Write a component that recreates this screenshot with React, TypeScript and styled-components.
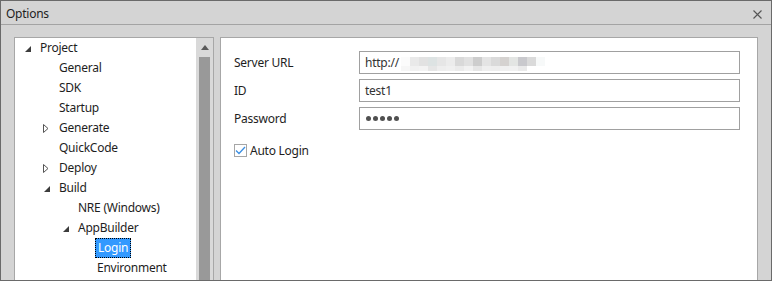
import React from "react";
import styled, { createGlobalStyle } from "styled-components";

const GlobalStyle = createGlobalStyle`
  html, body {
    margin: 0;
    padding: 0;
    background: #ffffff;
  }
  * {
    box-sizing: border-box;
  }
`;

const font = `"Noto Sans", "Open Sans", sans-serif`;

const Window = styled.div`
  width: 772px;
  height: 281px;
  border: 1px solid #6a6a6a;
  background-color: #d4d4d4;
  display: flex;
  flex-direction: column;
  overflow: hidden;
  font-family: ${font};
  font-size: 12px;
  letter-spacing: -0.25px;
  color: #1e1e1e;
`;

const TitleBar = styled.div`
  height: 24px;
  flex: none;
  display: flex;
  align-items: center;
  justify-content: space-between;
  padding: 3px 9px 0 5px;
  border-bottom: 1px solid #a3a3a3;
`;

const Title = styled.span`
  font-size: 12px;
  line-height: 1;
`;

const CloseButton = styled.svg`
  width: 9px;
  height: 9px;
  display: block;
`;

const Body = styled.div`
  flex: 1;
  min-height: 0;
  display: flex;
  gap: 6px;
  padding: 12px 13px 0 13px;
`;

const TreePanel = styled.div`
  width: 200px;
  height: 260px;
  flex: none;
  display: flex;
  border: 1px solid #a7a7a7;
  background: #ffffff;
`;

const TreeList = styled.ul`
  flex: 1;
  list-style: none;
  margin: 0;
  padding: 0;
`;

const TreeRow = styled.li<{ $level: number }>`
  height: 20px;
  display: flex;
  align-items: center;
  padding-left: ${({ $level }) => 10 + $level * 19}px;
  white-space: nowrap;
`;

const ArrowCell = styled.span`
  width: 15px;
  height: 20px;
  flex: none;
  display: flex;
  align-items: center;
`;

const Label = styled.span<{ $selected?: boolean }>`
  height: 20px;
  line-height: 18px;
  margin-left: ${({ $selected }) => ($selected ? "-2px" : "0")};
  padding: 0 ${({ $selected }) => ($selected ? "2px" : "0")};
  background: ${({ $selected }) => ($selected ? "#3399ff" : "transparent")};
  color: ${({ $selected }) => ($selected ? "#ffffff" : "#1e1e1e")};
  border: 1px ${({ $selected }) => ($selected ? "dotted #000000" : "solid transparent")};
  border-left-width: ${({ $selected }) => ($selected ? "1px" : "0")};
`;

const ScrollBar = styled.div`
  width: 17px;
  flex: none;
  display: flex;
  flex-direction: column;
  background: #d9d9d9;
`;

const ScrollArrow = styled.div`
  height: 19px;
  display: flex;
  align-items: center;
  justify-content: center;
`;

const ScrollThumb = styled.div`
  flex: 1;
  margin: 0 3px 0 3px;
  background: #999999;
`;

const ContentPanel = styled.div`
  width: 538px;
  height: 260px;
  flex: none;
  border: 1px solid #a7a7a7;
  background: #ffffff;
  padding: 13px 17px 0 13px;
  display: flex;
  flex-direction: column;
  gap: 5px;
`;

const FieldRow = styled.div`
  display: flex;
  align-items: center;
  height: 23px;
`;

const FieldLabel = styled.span`
  width: 125px;
  flex: none;
`;

const TextBox = styled.div`
  flex: 1;
  height: 23px;
  border: 1px solid #a0a0a0;
  display: flex;
  align-items: center;
  padding-left: 5px;
  color: #333333;
  overflow: hidden;
`;

const Dots = styled.span`
  display: flex;
  gap: 2px;
  padding-left: 1px;
`;

const Dot = styled.span`
  width: 5px;
  height: 5px;
  border-radius: 50%;
  background: #505050;
`;

const Pixelated = styled.span`
  display: grid;
  grid-template-columns: repeat(18, 9px);
  grid-template-rows: 9px 5px;
  margin-left: 2px;
  margin-top: 3px;
`;

const Pixel = styled.span<{ $c: string }>`
  background: ${({ $c }) => $c};
`;

const CheckRow = styled.label`
  display: flex;
  align-items: center;
  gap: 3px;
  margin-top: 7px;
  height: 17px;
`;

const CheckBox = styled.span`
  width: 13px;
  height: 13px;
  border: 1px solid #a6a6a6;
  background: #ffffff;
  display: flex;
  align-items: center;
  justify-content: center;
`;

type Node = {
  label: string;
  level: number;
  arrow?: "open" | "closed";
  selected?: boolean;
};

const tree: Node[] = [
  { label: "Project", level: 0, arrow: "open" },
  { label: "General", level: 1 },
  { label: "SDK", level: 1 },
  { label: "Startup", level: 1 },
  { label: "Generate", level: 1, arrow: "closed" },
  { label: "QuickCode", level: 1 },
  { label: "Deploy", level: 1, arrow: "closed" },
  { label: "Build", level: 1, arrow: "open" },
  { label: "NRE (Windows)", level: 2 },
  { label: "AppBuilder", level: 2, arrow: "open" },
  { label: "Login", level: 3, selected: true },
  { label: "Environment", level: 3 },
];

const row1 = [
  "#fbfbfb", "#e9e9e9", "#e2e2e2", "#dde3e3", "#e6e6e6", "#ececec", "#d9d9d9",
  "#e1e1e1", "#cdcdcd", "#e4e4e4", "#dadada", "#d5d2d0", "#e3e5e3", "#c9c9cd",
  "#dadada", "#f7f9f9", "#ffffff", "#ffffff",
];
const row2 = [
  "#f6f6f6", "#f1f1f1", "#f3f3f3", "#e6e6e6", "#eeeeee", "#f0f0f0", "#ebebeb",
  "#f2f2f2", "#e6e6e6", "#efefef", "#eeeeee", "#f0f0f0", "#f1f1f1", "#eaeaea",
  "#ffffff", "#ffffff", "#ffffff", "#ffffff",
];

const Arrow = ({ kind }: { kind?: "open" | "closed" }) => {
  if (kind === "open") {
    return (
      <svg width="7" height="7" viewBox="0 0 7 7" style={{ marginTop: 2 }}>
        <polygon points="6,0 6,6 0,6" fill="#3c3c3c" />
      </svg>
    );
  }
  if (kind === "closed") {
    return (
      <svg width="6" height="9" viewBox="0 0 6 9" style={{ marginLeft: -1 }}>
        <polygon points="0.5,0.5 5,4.5 0.5,8.5" fill="none" stroke="#555555" strokeWidth="1" />
      </svg>
    );
  }
  return null;
};

export default function App() {
  return (
    <>
      <GlobalStyle />
      <Window>
        <TitleBar>
          <Title>Options</Title>
          <CloseButton viewBox="0 0 9 9">
            <path d="M0.5 0.5 L8.5 8.5 M8.5 0.5 L0.5 8.5" stroke="#555555" strokeWidth="1.1" />
          </CloseButton>
        </TitleBar>
        <Body>
          <TreePanel>
            <TreeList>
              {tree.map((n) => (
                <TreeRow key={n.label} $level={n.level}>
                  <ArrowCell>
                    <Arrow kind={n.arrow} />
                  </ArrowCell>
                  <Label $selected={n.selected}>{n.label}</Label>
                </TreeRow>
              ))}
            </TreeList>
            <ScrollBar>
              <ScrollArrow>
                <svg width="8" height="5" viewBox="0 0 8 5">
                  <polygon points="4,0 8,5 0,5" fill="#5a5a5a" />
                </svg>
              </ScrollArrow>
              <ScrollThumb />
            </ScrollBar>
          </TreePanel>
          <ContentPanel>
            <FieldRow>
              <FieldLabel>Server URL</FieldLabel>
              <TextBox>
                http://
                <Pixelated>
                  {row1.map((c, i) => (
                    <Pixel key={"a" + i} $c={c} />
                  ))}
                  {row2.map((c, i) => (
                    <Pixel key={"b" + i} $c={c} />
                  ))}
                </Pixelated>
              </TextBox>
            </FieldRow>
            <FieldRow>
              <FieldLabel>ID</FieldLabel>
              <TextBox>test1</TextBox>
            </FieldRow>
            <FieldRow>
              <FieldLabel>Password</FieldLabel>
              <TextBox>
                <Dots>
                  {[0, 1, 2, 3, 4].map((i) => (
                    <Dot key={i} />
                  ))}
                </Dots>
              </TextBox>
            </FieldRow>
            <CheckRow>
              <CheckBox>
                <svg width="11" height="9" viewBox="0 0 11 9">
                  <path d="M1 4.5 L4 7.5 L10 1" fill="none" stroke="#3b8fe3" strokeWidth="1.3" />
                </svg>
              </CheckBox>
              Auto Login
            </CheckRow>
          </ContentPanel>
        </Body>
      </Window>
    </>
  );
}
